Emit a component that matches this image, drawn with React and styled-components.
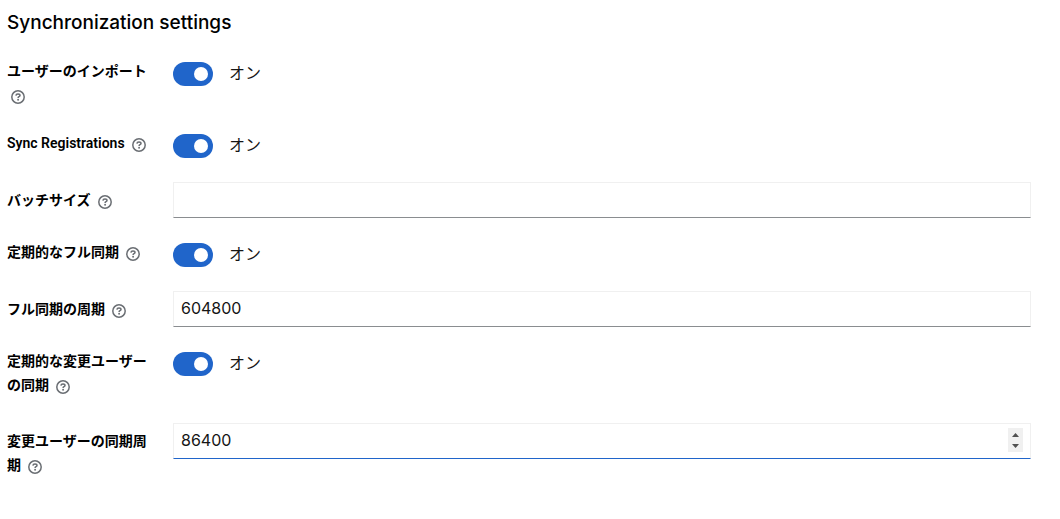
import React, { useState } from 'react'
import styled, { createGlobalStyle } from 'styled-components'

const HelpIcon = () => (
    <svg width="14" height="14" viewBox="0 0 14 14" fill="none" stroke="currentColor" aria-hidden="true">
        <circle cx="7" cy="7" r="6.2" strokeWidth="1.5" />
        <path d="M4.9 5.6C5 4.6 5.8 4.1 7 4.1c1.2 0 2 .55 2 1.4 0 1.25-1.9 1.2-1.9 2.4" strokeWidth="1.5" />
        <circle cx="7.1" cy="9.8" r=".95" fill="currentColor" stroke="none" />
    </svg>
)

const Field = ({ id, label, boxed, children }) => (
    <Row>
        <LabelCell $boxed={boxed}>
            <Label htmlFor={id}>{label}</Label>{' '}
            <HelpButton type="button" aria-label={`${label} help`}><HelpIcon /></HelpButton>
        </LabelCell>
        {children}
    </Row>
)

const SwitchField = ({ id, label }) => {
    const [on, setOn] = useState(true)
    return (
        <Field id={id} label={label}>
            <SwitchLabel>
                <Switch id={id} type="checkbox" role="switch" checked={on} onChange={e => setOn(e.target.checked)} />
                <SwitchText>{on ? 'オン' : 'オフ'}</SwitchText>
            </SwitchLabel>
        </Field>
    )
}

const NumberField = ({ id, label, value, active }) => (
    <Field id={id} label={label} boxed>
        <NumberInput id={id} type="number" defaultValue={value} $active={active} />
    </Field>
)

export default function App() {
    return (
        <>
            <GlobalStyle />
            <Section>
                <Title>Synchronization settings</Title>
                <Form>
                    <SwitchField id="import-users" label="ユーザーのインポート" />
                    <SwitchField id="sync-registrations" label="Sync Registrations" />
                    <NumberField id="batch-size" label="バッチサイズ" />
                    <SwitchField id="periodic-full-sync" label="定期的なフル同期" />
                    <NumberField id="full-sync-period" label="フル同期の周期" value="604800" />
                    <SwitchField id="periodic-changed-sync" label="定期的な変更ユーザーの同期" />
                    <NumberField id="changed-sync-period" label="変更ユーザーの同期周期" value="86400" active />
                </Form>
            </Section>
        </>
    )
}

const spinArrows = `url("data:image/svg+xml,%3Csvg xmlns='http://www.w3.org/2000/svg' width='15' height='24'%3E%3Cpath d='M4 9l3.500-4L11 9zM4 16l3.500 4L11 16z' fill='%23505050'/%3E%3C/svg%3E")`;

const GlobalStyle = createGlobalStyle`
    * {
        box-sizing: border-box;
    }
    body {
        margin: 0;
        background: #fff;
        color: #151515;
        font-family: Inter, 'Noto Sans CJK JP', sans-serif;
        font-size: 16px;
        line-height: 24px;
    }
`;

const Section = styled.section`
    padding: 8px 29px 24px 7px;
`;

const Title = styled.h1`
    margin: 0 0 23px;
    color: #000;
    font-size: 19px;
    font-weight: 500;
    line-height: 30px;
`;

const Form = styled.form`
    display: grid;
    gap: 24px;
`;

const Row = styled.div`
    display: grid;
    grid-template-columns: 152px 1fr;
    column-gap: 14px;
    align-items: start;
`;

const LabelCell = styled.div`
    margin: ${props => props.$boxed ? '6px 0 0' : '-2px 0 2px'};
    font-family: Roboto, 'Noto Sans CJK JP', sans-serif;
    font-size: 14px;
    line-height: 24px;
`;

const Label = styled.label`
    color: #000;
    font-weight: 600;
`;

const HelpButton = styled.button`
    display: inline-block;
    padding: 0 4px;
    border: none;
    background: none;
    color: #6a6e73;
    font-size: 14px;
    line-height: 14px;
    vertical-align: -4px;
    cursor: pointer;

    svg {
        display: block;
    }
`;

const SwitchLabel = styled.label`
    display: flex;
    gap: 16px;
    padding-top: 1px;
    justify-self: start;
    cursor: pointer;
`;

const SwitchText = styled.span`
    line-height: 22px;
`;

const Switch = styled.input`
    appearance: none;
    display: flex;
    align-items: center;
    width: 40px;
    height: 24px;
    margin: 0;
    padding: 0 5px;
    border-radius: 12px;
    background: #8a8d90;
    cursor: pointer;

    &:before {
        content: '';
        width: 14px;
        height: 14px;
        border-radius: 50%;
        background: #fff;
    }
    &:checked {
        justify-content: flex-end;
        background: #2065ca;
    }
`;

const NumberInput = styled.input`
    width: 100%;
    height: 36px;
    padding: 4px 7px 6px;
    border: 1px solid #f0f0f0;
    border-bottom-color: ${props => props.$active ? '#2065ca' : '#8a8d90'};
    border-radius: 0;
    outline: none;
    background: #fff;
    color: #151515;
    font: inherit;

    &::-webkit-inner-spin-button {
        appearance: none;
        width: 15px;
        height: 24px;
        background: #f0f0f0 ${spinArrows} no-repeat;
        opacity: ${props => props.$active ? 1 : 0};
    }
`;
